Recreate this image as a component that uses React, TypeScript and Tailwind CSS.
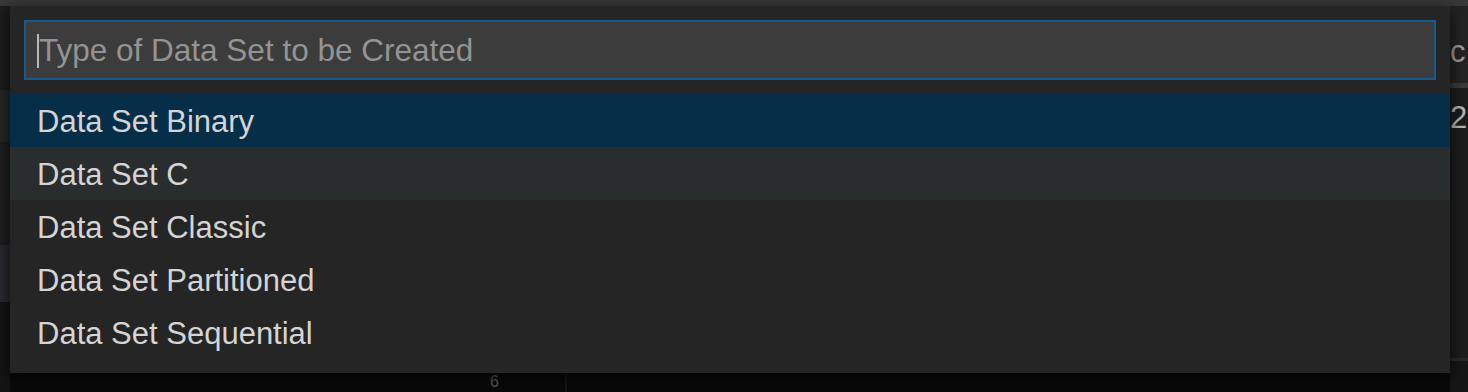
import React from 'react'

const items = [
  'Data Set Binary',
  'Data Set C',
  'Data Set Classic',
  'Data Set Partitioned',
  'Data Set Sequential',
]

function QuickPick() {
  return (
    <div className="absolute left-[10px] top-[6px] w-[1440px] bg-[#252526] shadow-[0_4px_14px_rgba(0,0,0,0.75)]">
      {/* input box */}
      <div className="px-[14px] pt-[14px] pb-[14px]">
        <div className="relative flex h-[60px] items-center border-2 border-[#175a8e] bg-[#3c3c3c] pl-[12px]">
          <div className="absolute left-[11px] top-[12px] h-[34px] w-[2px] bg-[#b8b8b8]" />
          <span className="pl-[1px] pt-[2px] text-[31.5px] leading-none text-[#939393]">Type of Data Set to be Created</span>
        </div>
      </div>

      {/* list */}
      <div className="pb-[14px]">
        {items.map((label, i) => (
          <div
            key={label}
            className={`flex h-[53px] items-center pl-[27px] pt-[2px] text-[31px] leading-none text-[#d4d4d4] ${
              i === 0 ? 'bg-[#072e48]' : i === 1 ? 'bg-[#2a2d2e]' : ''
            }`}
          >
            {label}
          </div>
        ))}
      </div>
    </div>
  )
}

export default function App() {
  return (
    <div
      className="relative h-[392px] w-[1468px] overflow-hidden bg-[#1e1e1e]"
      style={{ fontFamily: '"Liberation Sans", Arial, sans-serif' }}
    >
      <div className="h-[6px] bg-[#383838]" />
      <div className="flex h-[386px]">
        {/* left gutter */}
        <div className="flex w-[10px] flex-col">
          <div className="h-[84px] bg-[#1c1c1c]" />
          <div className="h-[52px] bg-[#262626]" />
          <div className="h-[103px] bg-[#1e1e1e]" />
          <div className="h-[57px] bg-[#2a2a2f]" />
          <div className="flex-1 bg-[#141414]" />
        </div>

        {/* editor area under the picker */}
        <div className="flex flex-1 flex-col">
          <div className="flex-1 bg-[#1e1e1e]" />
          <div className="flex h-[19px] bg-[#090909]">
            <div className="w-[396px]" />
            <div className="w-[161px] border-r-2 border-[#161616] pl-[84px] pt-[1px] text-[16px] leading-none text-[#5a5a5a]">
              6
            </div>
          </div>
        </div>

        {/* right gutter */}
        <div className="flex w-[18px] flex-col overflow-hidden">
          <div className="h-[77px] bg-[#232323] pt-[30px] text-[31px] leading-none text-[#9a9a9a]">c</div>
          <div className="h-[5px] bg-[#3a3a3a]" />
          <div className="h-[270px] bg-[#1c1c1c] pt-[14px] text-[31px] leading-none text-[#b4b4b4]">2</div>
          <div className="h-[3px] bg-[#2a2a2a]" />
          <div className="flex-1 bg-[#161616]" />
        </div>
      </div>

      <QuickPick />
    </div>
  )
}
